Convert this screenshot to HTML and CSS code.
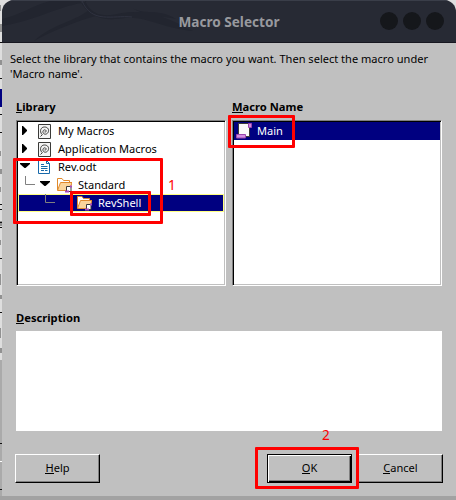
FILE: index.html
```html
<!DOCTYPE html>
<html lang="en">
<head>
<meta charset="utf-8">
<title>Macro Selector</title>
<link rel="stylesheet" href="styles.css">
</head>
<body>
<svg class="backdrop" width="456" height="500" aria-hidden="true">
  <rect width="456" height="500" fill="#dedede"/>
  <rect y="360" width="3" height="140" fill="#aaa"/>
  <rect y="496" width="456" height="4" fill="#a2a2a2"/>
  <rect y="89" width="2" height="18" fill="#000080"/>
  <path d="M0 5v6M1 24v8M1 60v5M0 151v5M1 169v5M0 187v5M1 221v5M0 240v5M0 274v11M1 295v4M0 328v10M1 348v5" stroke="#444"/>
  <path d="M0 42.500h2M0 78.500h2M0 114.500h2M0 132.500h2M0 204.500h2M0 209.500h2M0 222.500h2M0 227.500h2M0 258.500h2M0 312.500h2M0 443.500h2M0 489.500h2" stroke="#111"/>
  <path d="M0 461.500h2" stroke="#fff"/>
</svg>
<main class="dialog">
  <header class="titlebar">
    <svg class="swirl" width="454" height="42" aria-hidden="true">
      <path d="M0 25C35 19 55 6 80 2L85 0H48C30 5 18 14 0 18ZM32 40C50 23 75 20 88 8L94 15C75 20 50 30 32 40ZM83 0C91 18 108 15 120 12C145 8 165 16 191 30C162 28 145 15 123 17C103 20 88 18 78 0ZM127 5C143 16 155 6 174 18C157 14 148 18 127 5Z" fill="#22252f"/>
      <path d="M80 0C90 23 110 14 130 16" fill="none" stroke="#303340"/>
    </svg>
    <h1>Macro Selector</h1>
    <div class="dots"><i></i><i></i><i></i></div>
  </header>
  <div class="content">
    <p class="intro"><span>Select the library that contains the macro you want. Then select the macro under</span><br><span>'Macro name'.</span></p>
    <div class="columns">
      <section>
        <h2><u>L</u>ibrary</h2>
        <div class="list">
          <div class="row"><svg class="arrow" viewBox="0 0 10 10"><path d="M2 0H3L7 4V5L3 9H2Z"/></svg><svg class="icon" viewBox="0 0 16 16"><use href="#macro"/></svg><span>My Macros</span></div>
          <div class="row"><svg class="arrow" viewBox="0 0 10 10"><path d="M2 0H3L7 4V5L3 9H2Z"/></svg><svg class="icon" viewBox="0 0 16 16"><use href="#macro"/></svg><span>Application Macros</span></div>
          <div class="row"><svg class="arrow" viewBox="0 0 10 10"><path d="M0 1H10V2L5.500 6H4.500L0 2Z"/></svg><svg class="icon" viewBox="0 0 16 16"><path d="M2.500 1.500H10.500L13.500 4.500V14.500H2.500Z" fill="#fff" stroke="#1769aa"/><path d="M10.500 1.500V4.500H13.500M5 5.500H8M5 7.500H11.500M5 9.500H11.500M5 11.500H8M9 11.500H11.500" fill="none" stroke="#1769aa"/></svg><span>Rev.odt</span></div>
          <div class="row level1"><svg class="branch" viewBox="0 0 10 18"><path d="M.5 0V8.500H10"/></svg><svg class="arrow" viewBox="0 0 10 10"><path d="M0 1H10V2L5.500 6H4.500L0 2Z"/></svg><svg class="icon" viewBox="0 0 16 16"><use href="#folder"/></svg><span>Standard</span></div>
          <div class="row level2 selected"><svg class="branch" viewBox="0 0 10 18"><path d="M.5 0V8.500H10"/></svg><svg class="icon" viewBox="0 0 16 16"><use href="#folder"/></svg><span>RevShell</span></div>
        </div>
      </section>
      <section>
        <h2><u>M</u>acro Name</h2>
        <div class="list names">
          <div class="row selected"><svg class="icon" viewBox="0 0 16 16"><path d="M2.500 .5H13.500V13.500H2.500Z" fill="#fafafa" stroke="#3a3a38"/><path d="M12.500 .5H15.500V4.500H12.500ZM.5 11.500H9.500V15H.5Z" fill="#d08be0" stroke="#9a45ac"/></svg><span>Main</span></div>
        </div>
      </section>
    </div>
    <h2 class="desc-title"><u>D</u>escription</h2>
    <div class="description"></div>
    <footer><button><u>H</u>elp</button><button class="ok"><u>O</u>K</button><button><u>C</u>ancel</button></footer>
  </div>
</main>
<div class="mark library-mark"></div><div class="mark shell-mark"></div><div class="mark main-mark"></div><div class="mark ok-mark"></div>
<span class="number one">1</span><span class="number two">2</span>
<svg width="0" height="0" class="backdrop">
  <symbol id="macro" viewBox="0 0 16 16"><path d="M2.500 1.500H14.500V15.500H2.500Z" fill="#f4f4f4" stroke="#3a3a38"/><path d="M4.500 13.500L6.500 11.500M6 11.500C3 8 5 4 8.500 4C12 4 13.500 7 12 9.500C10.500 12 7.500 11.500 7 9.500C6.500 7 9 6 10 7.500C10.500 8.500 9.500 9.500 8.500 9" fill="none" stroke="#3a3a38"/></symbol>
  <symbol id="folder" viewBox="0 0 16 16"><path d="M1.500 13V1.500H6L7.500 3.500H13.500V6" fill="#fff" stroke="#e08a2c"/><path d="M1.500 13.500L4.500 5.500H16L13.500 13.500Z" fill="#fbd59b" stroke="#e08a2c"/><path d="M10.500 9.500H15V14.500H10.500Z" fill="#fff" stroke="#3a3a38"/><path d="M9 14.500H13M14 9.500H16" stroke="#a94bbb" stroke-width="2"/></symbol>
</svg>
</body>
</html>
```

FILE: styles.css
```css
*{box-sizing:border-box}
body{margin:0;width:456px;height:500px;overflow:hidden;position:relative;font:11.06px/15px "Noto Sans",sans-serif;color:#000}
.backdrop{position:absolute;left:0;top:0}
.dialog{position:relative;width:454px;height:496px;margin-left:2px;background:#c0c0c0;border-radius:12px 12px 0 0;overflow:hidden}
.titlebar{height:43px;position:relative;background:#272a34;border-top:1px solid #3a3e49;border-bottom:1px solid #171720;display:flex;align-items:center;justify-content:center}
.swirl{position:absolute;left:0;top:0}
h1{margin:0;font:bold 13.6px/20px "Noto Sans",sans-serif;color:#98999e;position:relative}
.dots{position:absolute;right:12px;top:11px;display:flex;gap:5px}
.dots i{width:18px;height:18px;border-radius:50%;background:#15171b}
.content{padding:8px 14px 0}
.intro{margin:0 0 0 -6px;height:48px;white-space:nowrap}
u{text-decoration:none;border-bottom:1px solid #000;display:inline-block;height:14px;line-height:15px}
h2{font-size:11.2px;line-height:15px;height:21px;margin:0;font-weight:bold}
.columns{display:flex;gap:6px}
.columns section{width:210px}
.list{height:166px;background:#fff;border:1px solid;border-color:#808080 #fff #fff #808080;box-shadow:inset 1px 1px #000,inset -1px -1px #c0c0c0;padding:1px}
.row{display:flex;align-items:center;height:18px;padding-left:2px;white-space:nowrap}
.row span{padding-bottom:2px}
.arrow{width:10px;height:10px;margin-right:6px;flex:none}
.icon{width:16px;height:16px;margin-right:6px;flex:none}
.branch{width:10px;height:18px;margin-right:5px;fill:none;stroke:#808080;flex:none}
.level1{padding-left:7px}
.selected{background:#000080;color:#fff;border:1px solid #000080}
.level2.selected{border-color:#ffff7f;padding-left:26px}
.level2 .branch{margin-right:21px}
.names .row{padding-left:1px}
.names .icon{margin-right:5px}
.desc-title{margin-top:24px}
.description{height:100px;background:#fff}
footer{display:flex;margin:23px -1px 0;gap:6px}
button{width:85px;height:29px;padding:0 0 2px;background:#c0c0c0;border:1px solid;border-color:#fff #000 #000 #fff;box-shadow:inset -1px -1px #808080;font:11.06px/15px "Noto Sans",sans-serif;color:#000}
.ok{margin-left:auto;border-color:#000;box-shadow:inset 1px 1px #fff,inset -1px -1px #000,inset -2px -2px #808080}
.mark{position:absolute;border:3px solid red;border-radius:1px}
.library-mark{left:13px;top:158px;width:150px;height:66px}
.shell-mark{left:70px;top:191px;width:81px;height:25px}
.main-mark{left:228px;top:115px;width:67px;height:33px}
.ok-mark{left:255px;top:447px;width:104px;height:42px}
.number{position:absolute;color:red;font-size:13.6px;line-height:18px}
.one{left:168px;top:176px}.two{left:322px;top:426px}
```
